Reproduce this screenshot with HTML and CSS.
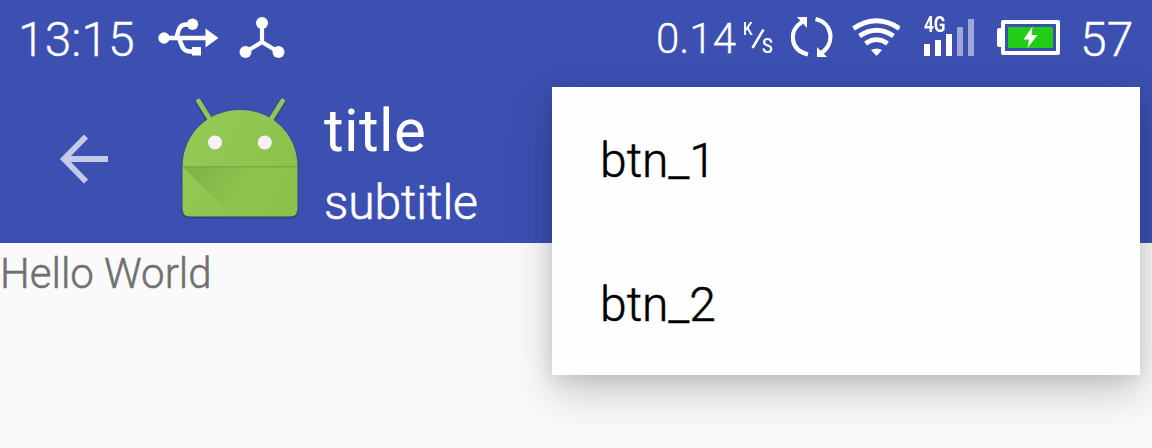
FILE: index.html
```
<!DOCTYPE html>
<html lang="en">
<head>
<meta charset="utf-8">
<title>Toolbar</title>
<link rel="stylesheet" href="styles.css">
</head>
<body>
<div class="screen">
  <header class="app-bar">
    <div class="status">
      <div class="status-left">
        <span class="clock">13:15</span>
        <svg class="usb" width="61" height="80" viewBox="158 0 61 80">
          <path d="M164 38H208M175 38C179 38 176 24.500 186 24.500H192M178 38C182 40 180 51.500 190 51.500H194" fill="none" stroke="#fff" stroke-width="4.500"/>
          <circle cx="164" cy="38" r="5.700" fill="#fff"/><circle cx="192.500" cy="24.300" r="5.700" fill="#fff"/>
          <path d="M205.500 28.500L218.500 38L205.500 47.500ZM192 47H201V55.500H192Z" fill="#fff"/>
        </svg>
        <svg class="nodes" width="46" height="80" viewBox="239 0 46 80">
          <path d="M262 23V42L245.500 52M262 42L278.500 52" fill="none" stroke="#fff" stroke-width="4.200"/>
          <circle cx="262" cy="23" r="6" fill="#fff"/><circle cx="245.500" cy="52" r="6" fill="#fff"/><circle cx="278.500" cy="52" r="6" fill="#fff"/>
        </svg>
      </div>
      <div class="status-right">
        <span class="speed">0.14</span>
        <span class="unit"><span class="unit-k">K</span><svg width="14" height="24" viewBox="0 0 14 24"><path d="M1.500 21L12.500 2.500" stroke="#fff" stroke-width="2.500"/></svg><span class="unit-s">S</span></span>
        <svg class="sync" width="42" height="80" viewBox="791 0 42 80">
          <path d="M808 54.500C790 50 788 31 802 22M815.500 19C833 23 835 43 822 52.500" fill="none" stroke="#fff" stroke-width="4.200"/>
          <path d="M797 17H807V28ZM817 47V57H827Z" fill="#fff"/>
        </svg>
        <svg class="wifi" width="48" height="80" viewBox="852 0 48 80">
          <g fill="none" stroke="#fff" stroke-width="4.800"><path d="M853.500 28.500Q876.500 13 899.500 28.500"/><path d="M859.500 36Q876.500 24.500 893.500 36"/><path d="M865.500 43.500Q876.500 35.800 887.500 43.500"/></g>
          <path d="M871 50Q876.500 46.800 882 50L877.500 55Q876.500 56 875.500 55Z" fill="#fff"/>
        </svg>
        <span class="signal">
          <span class="network">4G</span>
          <span class="bars"><i class="bar b1"></i><i class="bar b2"></i><i class="bar b3"></i><i class="bar b4 dim"></i><i class="bar b5 dim"></i></span>
        </span>
        <svg class="battery" width="64" height="80" viewBox="997 0 64 80">
          <path d="M1003 20H1058Q1060 20 1060 22V53Q1060 55 1058 55H1003Q1001 55 1001 53V47H999Q997 47 997 45V30Q997 28 999 28H1001V22Q1001 20 1003 20ZM1005 24V51H1056V24Z" fill="#fff" fill-rule="evenodd"/>
          <path d="M1008 27H1053V48H1008Z" fill="#21cd16"/>
          <path d="M1032.500 26.500L1023.500 39.500H1029L1027.500 48L1037.500 35H1031.500Z" fill="#fff"/>
        </svg>
        <span class="level">57</span>
      </div>
    </div>
    <div class="toolbar">
      <svg class="back" width="50" height="50" viewBox="0 0 50 50"><path d="M49 25H6M27 2.500L5 25L27 47.500" fill="none" stroke="#c5cae9" stroke-width="5.800"/></svg>
      <svg class="robot" width="128" height="132" viewBox="176 92 128 132">
        <defs>
          <linearGradient id="fold" gradientUnits="userSpaceOnUse" x1="185" y1="167" x2="240" y2="200"><stop offset="0" stop-color="#7db045"/><stop offset="1" stop-color="#7db045" stop-opacity="0"/></linearGradient>
          <linearGradient id="body" x1="0" y1="0" x2="1" y2=".5"><stop offset="0" stop-color="#93cb58"/><stop offset="1" stop-color="#8bc34a"/></linearGradient>
        </defs>
        <g class="robot-shape">
          <path d="M198.500 101L211 121M282.500 101L270 121" stroke="#8fc755" stroke-width="4.800" stroke-linecap="round"/>
          <path d="M182.500 167C182.500 134 208 110 240 110S297.500 134 297.500 167V209Q297.500 216.500 290 216.500H190Q182.500 216.500 182.500 209Z" fill="url(#body)"/>
        </g>
        <path d="M182.500 167H297.500V209Q297.500 216.500 290 216.500H233Z" fill="url(#fold)"/>
        <path d="M182.500 166.800H297.500" stroke="#72a13d" stroke-width="1"/>
        <circle cx="215" cy="142.500" r="7" fill="#f6f0f8"/><circle cx="264.800" cy="142.500" r="7" fill="#f6f0f8"/>
      </svg>
      <div class="titles">
        <div class="title">title</div>
        <div class="subtitle">subtitle</div>
      </div>
    </div>
  </header>
  <main class="content">Hello World</main>
  <div class="menu">
    <div class="item">btn_1</div>
    <div class="item">btn_2</div>
  </div>
</div>
</body>
</html>
```
FILE: styles.css
```
body { margin: 0; font-family: Roboto, sans-serif; }
.screen { position: relative; width: 1152px; height: 448px; overflow: hidden; background: #fafafa; }
.app-bar { height: 243px; background: #3c50b2; color: #fff; }
svg { display: block; flex: none; }
.status { display: flex; justify-content: space-between; height: 80px; }
.status-left, .status-right { display: flex; align-items: flex-start; }
.clock { width: 140px; padding-left: 18px; font-size: 48px; font-weight: 300; line-height: 80px; box-sizing: border-box; -webkit-text-stroke: .3px; }
.usb { margin-left: 18px; }
.nodes { margin-left: 20px; }
.status-right { width: 497px; }
.speed { width: 88px; padding-left: 1px; font-size: 42px; font-weight: 300; line-height: 77px; box-sizing: border-box; -webkit-text-stroke: .3px; }
.unit { display: flex; width: 30px; height: 33px; padding-top: 21px; font-size: 18px; font-weight: 500; line-height: 18px; }
.unit-k { width: 10px; margin-top: -1px; transform: scaleX(.85); transform-origin: left; }
.unit svg { margin: 6px -3px 0 -2px; }
.unit-s { margin-top: 16px; font-size: 20px; transform: scaleX(.9); transform-origin: left; }
.sync { margin-left: 18px; }
.wifi { margin-left: 19px; }
.signal { width: 52px; height: 39px; margin: 17px 0 0 24px; display: grid; }
.network, .bars { grid-area: 1 / 1; }
.network { font-size: 22px; font-weight: 700; line-height: 15px; transform: scaleX(.78); transform-origin: left; }
.bars { display: flex; align-items: flex-end; gap: 5px; }
.bar { width: 6px; background: #fff; }
.dim { background: #9ea7d8; }
.b1 { height: 12px; }
.b2 { height: 16px; }
.b3 { height: 22px; }
.b4 { height: 29px; }
.b5 { height: 37px; }
.battery { margin-left: 21px; }
.level { margin-left: 19px; font-size: 48px; font-weight: 300; line-height: 80px; -webkit-text-stroke: .3px; }
.toolbar { display: flex; height: 163px; }
.back { margin: 54px 0 0 59px; }
.robot { margin: 12px 0 0 67px; }
.robot-shape { filter: drop-shadow(0 1.500px 1px rgba(0, 0, 0, .35)); }
.titles { margin: 16px 0 0 20px; }
.title { font-size: 60px; line-height: 69px; letter-spacing: .4px; }
.subtitle { margin-top: 10px; font-size: 48px; font-weight: 300; line-height: 55px; letter-spacing: -.1px; -webkit-text-stroke: .6px; }
.content { font-size: 42px; font-weight: 300; line-height: 61px; color: #707070; -webkit-text-stroke: .5px; }
.menu { position: absolute; left: 552px; top: 87px; width: 588px; height: 288px; background: #fefefe; box-shadow: 0 18px 42px rgba(0, 0, 0, .2), 0 3px 18px rgba(0, 0, 0, .1); }
.item { height: 144px; padding-left: 48px; font-size: 48px; font-weight: 300; line-height: 148px; color: #000; box-sizing: border-box; -webkit-text-stroke: .5px; }
```
